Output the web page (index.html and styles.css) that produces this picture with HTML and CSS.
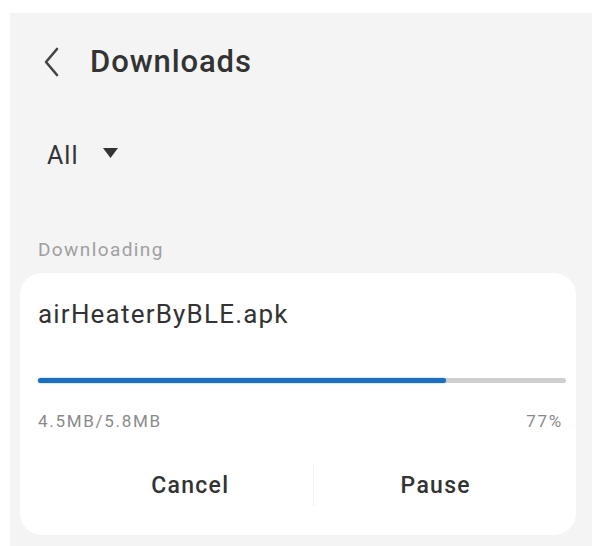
FILE: index.html
```html
<!DOCTYPE html>
<html>
<head>
<meta charset="utf-8">
<link rel="stylesheet" href="styles.css">
</head>
<body>
<div class="screen">
  <div class="header">
    <svg class="back" width="20" height="32" viewBox="0 0 20 32"><path d="M15 3 L4 16 L15 29" fill="none" stroke="#444" stroke-width="2.6" stroke-linecap="round" stroke-linejoin="round"/></svg>
    <span class="title">Downloads</span>
  </div>
  <div class="filter">
    <span class="filter-label">All</span>
    <svg class="caret" width="15" height="10" viewBox="0 0 15 10"><path d="M0 0 H15 L7.5 10 Z" fill="#333"/></svg>
  </div>
  <div class="section">Downloading</div>
  <div class="card">
    <div class="filename">airHeaterByBLE.apk</div>
    <div class="bar"><div class="fill" style="width:77.2%"></div></div>
    <div class="stats"><span>4.5MB/5.8MB</span><span>77%</span></div>
    <div class="actions">
      <div class="btn">Cancel</div>
      <div class="sep"></div>
      <div class="btn">Pause</div>
    </div>
  </div>
</div>
</body>
</html>
```
FILE: styles.css
```css
html, body {
  margin: 0;
  padding: 0;
  background: #ffffff;
  width: 596px;
  height: 546px;
  overflow: hidden;
  font-family: Roboto, "Liberation Sans", sans-serif;
}
.screen {
  margin: 13px 4px 0 10px;
  height: 533px;
  background: #f4f4f4;
  padding: 0 16px 0 10px;
  box-sizing: border-box;
  display: flex;
  flex-direction: column;
}
.header {
  display: flex;
  align-items: center;
  height: 96px;
  padding-left: 22px;
}
.back {
  margin-right: 28px;
  margin-top: 2px;
}
.title {
  font-size: 31px;
  font-weight: 500;
  color: #333;
  letter-spacing: 0.9px;
}
.filter {
  display: flex;
  align-items: center;
  height: 92px;
  padding-left: 27px;
}
.filter-label {
  font-size: 25px;
  color: #333;
  letter-spacing: 1px;
  margin-right: 25px;
}
.caret {
  margin-top: -4px;
}
.section {
  font-size: 19px;
  color: #a0a0a0;
  letter-spacing: 1.4px;
  padding-left: 18px;
  line-height: 22px;
  padding-top: 38px;
}
.card {
  background: #ffffff;
  border-radius: 22px;
  padding: 24px 10px 0 18px;
  height: 262px;
  box-sizing: border-box;
  margin-top: 12px;
}
.filename {
  font-size: 26px;
  color: #333;
  letter-spacing: 1.2px;
  line-height: 34px;
}
.bar {
  margin-top: 47px;
  height: 5px;
  background: #cfcfcf;
  border-radius: 2.5px;
}
.fill {
  height: 100%;
  background: #1e6fc0;
  border-radius: 2.5px;
  box-shadow: 0 0 2px #6ab8f0;
}
.stats {
  display: flex;
  justify-content: space-between;
  font-size: 17px;
  line-height: 19px;
  color: #8a8a8a;
  letter-spacing: 1.7px;
  margin-top: 29px;
  padding-right: 3px;
}
.actions {
  display: flex;
  align-items: center;
  margin-top: 33px;
  height: 42px;
  margin-left: -18px;
  margin-right: -10px;
  padding: 0 18px 0 48px;
}
.btn {
  flex: 1;
  text-align: center;
  font-size: 23px;
  font-weight: 500;
  color: #333;
  letter-spacing: 1.3px;
}
.sep {
  width: 1px;
  height: 42px;
  background: #eeeeee;
}
```
